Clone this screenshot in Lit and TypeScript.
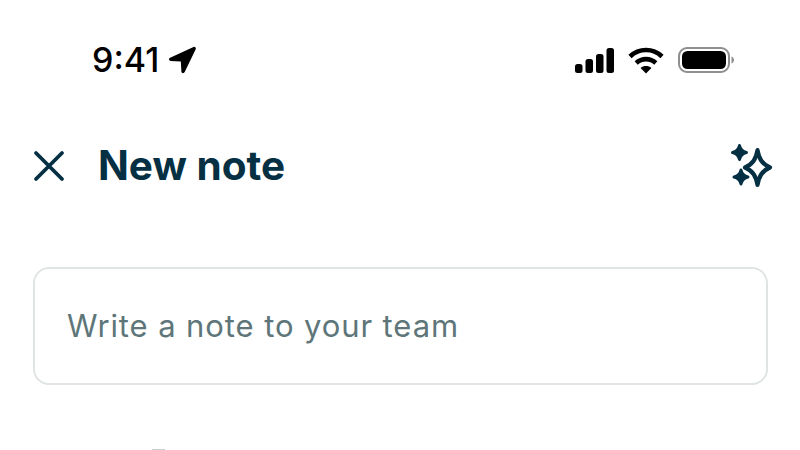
import { html, css, LitElement } from "lit"
import { customElement } from "lit/decorators.js"

@customElement("app-root")
export default class AppRoot extends LitElement {
  static styles = css`
    :host {
      display: block;
      width: 800px;
      height: 450px;
      overflow: hidden;
      background: #fff;
      font-family: Inter, "Liberation Sans", sans-serif;
    }

    svg {
      display: block;
      flex: none;
      overflow: visible;
    }

    .status {
      display: flex;
      align-items: center;
      justify-content: space-between;
      height: 40px;
      padding: 40px 66px 0 92px;
      color: #000;
    }

    .time {
      display: flex;
      align-items: center;
      gap: 9px;
      font-size: 34px;
      font-weight: 550;
      line-height: 40px;
    }

    .indicators {
      display: flex;
      align-items: center;
      gap: 14px;
    }

    .header {
      display: flex;
      align-items: center;
      justify-content: space-between;
      height: 50px;
      margin-top: 61px;
      padding: 0 28px 0 33px;
      color: #052f42;
    }

    .title-group {
      display: flex;
      align-items: center;
      gap: 33px;
    }

    .title {
      font-size: 40.5px;
      font-weight: 700;
      line-height: 50px;
    }

    .note {
      display: flex;
      align-items: center;
      box-sizing: border-box;
      height: 118px;
      margin: 76px 32px 0 33px;
      padding: 0 33px 2px 32px;
      border: 2px solid #e1e4e4;
      border-radius: 16px;
      color: #5e7679;
      font-size: 31px;
      letter-spacing: 0.9px;
    }

    .next {
      width: 13px;
      height: 1px;
      margin: 64px 0 0 152px;
      background: #c8cfd0;
    }
  `

  protected render() {
    return html`
      <div class="status">
        <div class="time">
          9:41
          <svg width="28" height="28" viewBox="0 0 28 28" fill="#000">
            <path d="M25.5 1 2.1 11.8c-1.7.8-1.2 3.1.6 3.2l10.100.4.6 10.100c.1 1.800 2.500 2.300 3.300.6L27.700 3.200c.6-1.300-.9-2.800-2.200-2.200Z" />
          </svg>
        </div>
        <div class="indicators">
          <svg width="39" height="25" viewBox="0 0 39 25" fill="#000">
            <rect x="0" y="16" width="7.5" height="9" rx="2.5" />
            <rect x="10.5" y="11" width="7.5" height="14" rx="2.5" />
            <rect x="21" y="6" width="7.5" height="19" rx="2.5" />
            <rect x="31.5" y="0" width="7.5" height="25" rx="2.5" />
          </svg>
          <svg width="36" height="27" viewBox="0 0 36 27" fill="none" stroke="#000" stroke-width="4.6">
            <path d="M2 9.5c9-8.6 23-8.6 32 0" />
            <path d="M8.2 16c5.6-5.2 14-5.2 19.6 0" />
            <path d="M18 26.5 12.6 21c3-2.6 7.8-2.6 10.8 0L18 26.5Z" fill="#000" stroke="none" />
          </svg>
          <svg width="56" height="28" viewBox="0 0 56 28" fill="none">
            <rect x="1" y="2" width="50" height="24" rx="8" stroke="#8f8f8f" stroke-width="2" />
            <rect x="4" y="5" width="44" height="18" rx="5.5" fill="#000" />
            <path d="M53.5 10.5c1.6.6 2.5 2 2.5 3.5s-.9 2.9-2.5 3.500Z" fill="#8f8f8f" />
          </svg>
        </div>
      </div>
      <div class="header">
        <div class="title-group">
          <svg width="32" height="32" viewBox="0 0 32 32" fill="none" stroke="#052f42" stroke-width="3.8" stroke-linecap="round">
            <path d="M3 3 29 29M29 3 3 29" />
          </svg>
          <div class="title">New note</div>
        </div>
        <svg width="42" height="42" viewBox="0 0 42 42" fill="none" stroke="#052f42">
          <path d="M27.5 5c1.5 9 4.5 14 12.500 17.500-8 3.500-11 8.500-12.500 17.500-1.500-9-4.500-14-12.500-17.500 8-3.500 11-8.500 12.500-17.500Z" stroke-width="4.2" stroke-linejoin="round" />
          <path d="M9.5.5c.9 4.200 2.800 6 7 7-4.200 1-6.100 2.800-7 7-.9-4.200-2.800-6-7-7 4.200-1 6.100-2.800 7-7Z" fill="#052f42" stroke-width="3" stroke-linejoin="round" />
          <path d="M11 25c.9 4.200 2.800 6 7 7-4.200 1-6.100 2.800-7 7-.9-4.200-2.800-6-7-7 4.200-1 6.100-2.800 7-7Z" fill="#052f42" stroke-width="3" stroke-linejoin="round" />
        </svg>
      </div>
      <div class="note">Write a note to your team</div>
      <div class="next"></div>
    `
  }
}
